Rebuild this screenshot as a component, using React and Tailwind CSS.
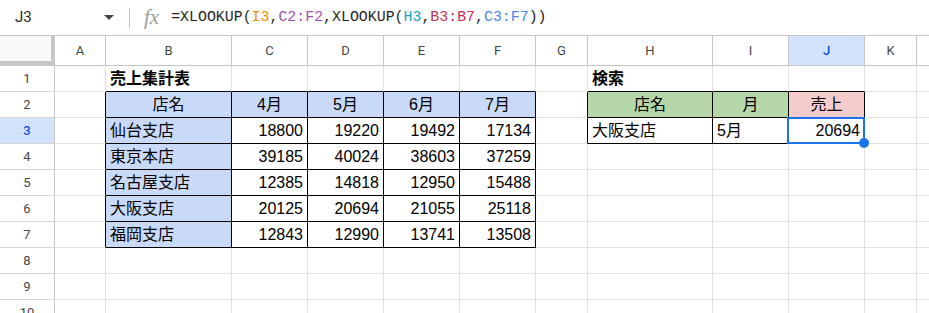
import React from "react";

const COLS = ["A", "B", "C", "D", "E", "F", "G", "H", "I", "J", "K", "L"];

const sales = [
  ["仙台支店", 18800, 19220, 19492, 17134],
  ["東京本店", 39185, 40024, 38603, 37259],
  ["名古屋支店", 12385, 14818, 12950, 15488],
  ["大阪支店", 20125, 20694, 21055, 25118],
  ["福岡支店", 12843, 12990, 13741, 13508],
];

// cell contents keyed by "C:r"
const cells = {};
cells["B1"] = { text: "売上集計表", bold: true };
cells["H1"] = { text: "検索", bold: true };
["店名", "4月", "5月", "6月", "7月"].forEach((t, i) => {
  cells[`${COLS[1 + i]}2`] = { text: t, align: "center", bg: "blue" };
});
sales.forEach((row, r) => {
  cells[`B${r + 3}`] = { text: row[0], bg: "blue" };
  row.slice(1).forEach((n, i) => {
    cells[`${COLS[2 + i]}${r + 3}`] = { text: String(n), align: "right" };
  });
});
cells["H2"] = { text: "店名", align: "center", bg: "green" };
cells["I2"] = { text: "月", align: "center", bg: "green" };
cells["J2"] = { text: "売上", align: "center", bg: "pink" };
cells["H3"] = { text: "大阪支店" };
cells["I3"] = { text: "5月" };
cells["J3"] = { text: "20694", align: "right" };

// bordered ranges: [c1, r1, c2, r2] with col index 0 = A
const ranges = [
  [1, 2, 5, 7],
  [7, 2, 9, 3],
];
const inRange = (c, r) =>
  ranges.some(([c1, r1, c2, r2]) => c >= c1 && c <= c2 && r >= r1 && r <= r2);

const bgClass = {
  blue: "bg-[#c9daf8]",
  green: "bg-[#b6d7a8]",
  pink: "bg-[#f4cccc]",
};

const FormulaBar = () => (
  <div className="h-[36px] flex items-center border-b border-[#c4c7c5] bg-white font-['Roboto',sans-serif]">
    <div className="w-[129px] flex items-center justify-between pl-[15px] pr-[15px]">
      <span className="text-[15px] text-[#1f1f1f]">J3</span>
      <svg width="10" height="6" viewBox="0 0 10 6">
        <path d="M0 0h10L5 5z" fill="#444746" />
      </svg>
    </div>
    <div className="w-px h-[20px] bg-[#c4c7c5]" />
    <span className="ml-[14px] text-[21px] italic text-[#9e9e9e] font-['Liberation_Serif',serif] leading-none">
      fx
    </span>
    <div className="ml-[12px] text-[14.9px] font-['Liberation_Mono',monospace] text-[#1f1f1f] whitespace-nowrap">
      =XLOOKUP(<span className="text-[#f09300]">I3</span>,
      <span className="text-[#9c4fb0]">C2:F2</span>,XLOOKUP(
      <span className="text-[#12a4c0]">H3</span>,
      <span className="text-[#c2305a]">B3:B7</span>,
      <span className="text-[#4a86e8]">C3:F7</span>))
    </div>
  </div>
);

const Cell = ({ c, r }) => {
  const key = `${COLS[c]}${r}`;
  const d = cells[key];
  const rightBlack = inRange(c, r) || inRange(c + 1, r);
  const bottomBlack = inRange(c, r) || inRange(c, r + 1);
  const align =
    d?.align === "center"
      ? "justify-center"
      : d?.align === "right"
      ? "justify-end pr-[4px]"
      : "justify-start pl-[4px]";
  return (
    <div
      className={`relative h-[26px] flex items-center border-r border-b overflow-visible whitespace-nowrap text-[16px] text-black font-['Liberation_Sans','Noto_Sans_CJK_JP',sans-serif] ${
        rightBlack ? "border-r-black" : "border-r-[#e1e1e1]"
      } ${bottomBlack ? "border-b-black" : "border-b-[#e1e1e1]"} ${
        d?.bg ? bgClass[d.bg] : "bg-white"
      } ${align} ${d?.bold ? "font-bold" : ""} ${key === "J3" ? "z-10" : ""}`}
    >
      {d?.text}
      {key === "J3" && (
        <div className="absolute left-[-2px] top-[-1px] right-[-1px] bottom-[-1px] border-2 border-[#1a73e8] pointer-events-none">
          <div className="absolute right-[-6px] bottom-[-6px] w-[10px] h-[10px] rounded-full bg-[#1a73e8]" />
        </div>
      )}
    </div>
  );
};

const App = () => {
  const rows = Array.from({ length: 10 }, (_, i) => i + 1);
  return (
    <div className="w-[929px] h-[313px] overflow-hidden bg-white">
      <FormulaBar />
      <div className="grid w-max grid-cols-[55px_51px_126px_76px_76px_76px_76px_52px_125px_76px_76px_52px_100px] font-['Roboto',sans-serif]">
        <div className="h-[30px] bg-[#f8f9fa] border-r-4 border-b-[5px] border-[#c4c7c5]" />
        {COLS.map((col) => (
          <div
            key={col}
            className={`h-[30px] flex items-center justify-center border-r border-b border-[#c4c7c5] text-[13px] ${
              col === "J"
                ? "bg-[#d3e3fd] text-[#0b57d0] font-medium"
                : "bg-white text-[#444746]"
            }`}
          >
            {/* column L sits past the window edge, its letter isn't visible */}
            {col === "L" ? "" : col}
          </div>
        ))}
        {rows.map((r) => (
          <React.Fragment key={r}>
            <div
              className={`h-[26px] flex items-center justify-center border-r border-b border-r-[#c4c7c5] border-b-[#d5d5d5] text-[13px] ${
                r === 3
                  ? "bg-[#d3e3fd] text-[#0b57d0] font-medium"
                  : "bg-white text-[#444746]"
              }`}
            >
              {r}
            </div>
            {COLS.map((col, c) => (
              <Cell key={col} c={c} r={r} />
            ))}
          </React.Fragment>
        ))}
      </div>
    </div>
  );
};

export default App;
